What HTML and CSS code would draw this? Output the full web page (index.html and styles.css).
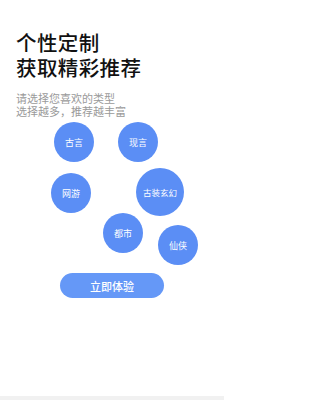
FILE: index.html
```html
<!DOCTYPE html>
<html lang="zh-CN">
<head>
<meta charset="utf-8">
<meta name="viewport" content="width=224">
<link rel="stylesheet" href="styles.css">
</head>
<body>
<div class="page">
  <h1 class="title">个性定制<br>获取精彩推荐</h1>
  <p class="sub">请选择您喜欢的类型<br>选择越多，推荐越丰富</p>
  <div class="canvas">
    <div class="bubble b1">古言</div>
    <div class="bubble b2">现言</div>
    <div class="bubble b3">网游</div>
    <div class="bubble b4">古装玄幻</div>
    <div class="bubble b5">都市</div>
    <div class="bubble b6">仙侠</div>
  </div>
  <div class="actions"><button class="btn">立即体验</button></div>
  <div class="spacer"></div>
  <div class="footer"></div>
</div>
</body>
</html>
```
FILE: styles.css
```css
* { box-sizing: border-box; }
html, body { margin: 0; padding: 0; background: #fff; }
body { font-family: "Liberation Sans", "Noto Sans CJK SC", sans-serif; }
.page {
  width: 224px;
  height: 400px;
  display: flex;
  flex-direction: column;
}
.title {
  margin: 0;
  padding: 31px 0 0 16px;
  font-size: 20.5px;
  line-height: 25px;
  font-weight: 500;
  color: #111;
  letter-spacing: 0.4px;
}
.sub {
  margin: 12px 0 0 16px;
  font-size: 11px;
  line-height: 12.5px;
  color: #9a9a9a;
}
.canvas {
  position: relative;
  height: 155px;
  flex: none;
}
.bubble {
  position: absolute;
  width: 40px;
  height: 40px;
  border-radius: 50%;
  background: #5b8ef5;
  color: #fff;
  font-size: 9px;
  display: flex;
  align-items: center;
  justify-content: center;
}
.b1 { left: 54px; top: 4px; }
.b2 { left: 118px; top: 4px; }
.b3 { left: 51px; top: 55px; }
.b4 { left: 136px; top: 50px; width: 48px; height: 48px; font-size: 8.5px; }
.b5 { left: 103px; top: 95px; }
.b6 { left: 158px; top: 107px; }
.actions {
  display: flex;
  justify-content: center;
}
.btn {
  width: 104px;
  height: 25px;
  border: none;
  border-radius: 13px;
  background: #6598f7;
  color: #fff;
  font-family: inherit;
  font-size: 11px;
  font-weight: 500;
  padding: 0;
}
.spacer { flex: 1; }
.footer { height: 4px; background: #f1f1f1; }
```
